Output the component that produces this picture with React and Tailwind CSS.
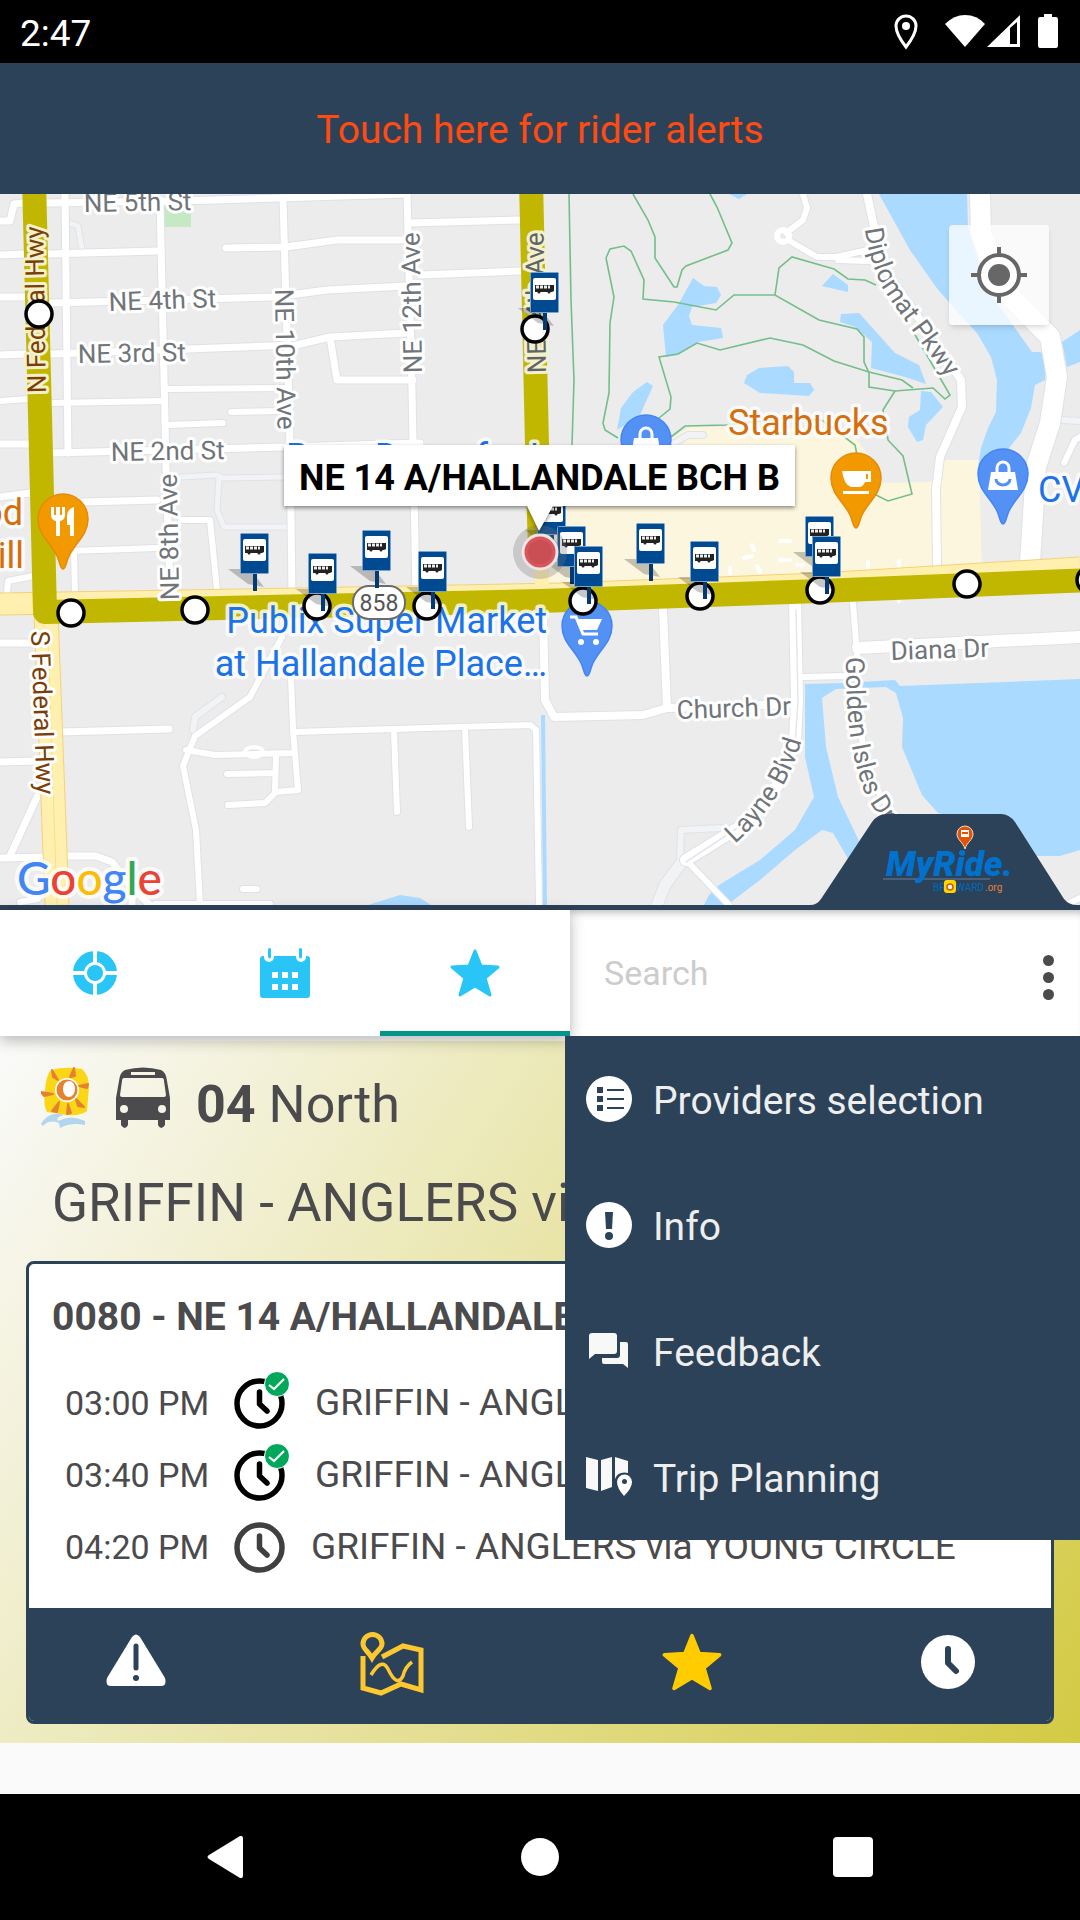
import React from 'react';

const roads = [
  { d: 'M0 221 H10 L14 204 L23 203 M46 203 L180 201 L406 194', w: 7 },
  { d: 'M0 255 L24 254 M48 254 L158 251 M226 248 L286 247 L337 240 L406 240 M410 223 L520 220', w: 7 },
  { d: 'M0 297 H27 M52 303 L275 297 L327 290 L406 286 M420 275 L520 271', w: 7 },
  { d: 'M0 355 L26 354 M52 354 L296 345 L330 337 L406 333 M330 337 L337 380 H413', w: 7 },
  { d: 'M167 389 L286 388 M0 401 L28 399 M52 403 L162 401 M231 412 L286 411 M167 425 L223 423', w: 6 },
  { d: 'M0 444 H28 M53 453 L286 447 L420 443 M0 497 L30 493 M83 502 L157 500', w: 7 },
  { d: 'M181 520 H210 L217 590 M70 551 L157 548 M74 551 L75 595 M7 593 L8 581 L33 576', w: 6 },
  { d: 'M65 194 L68 453 M160 200 L166 465 L170 590 M283 198 L290 444 L292 595 M407 194 L412 390 L416 595', w: 7 },
  { d: 'M0 643 H34 M60 732 L169 729 M0 762 L38 761 M37 797 L9 858 M0 858 L47 857 M68 856 H96 L112 862 L134 890 L150 905 M132 880 V905', w: 7 },
  { d: 'M282 637 L250 697 L195 736 L183 766 L196 830 L200 905 M186 750 L215 755 L294 753', w: 6 },
  { d: 'M291 677 L293 730 L298 790 L276 792 L265 803 L228 805 M276 755 L275 792 M227 774 L275 773', w: 6 },
  { d: 'M294 732 L530 725 L536 730 L539 905 M394 731 L397 812 M465 729 L469 827 M243 889 H257 M155 904 H270 M20 902 L38 899', w: 6 },
  { d: 'M543 613 L545 700 L554 717 L643 715 L667 708 L795 704 M663 610 L667 708', w: 8 },
  { d: 'M795 603 L797 700 L795 740 L778 785 L743 825 L686 860 M858 648 L1080 637', w: 12 },
  { d: 'M686 860 L729 905 M803 677 L845 676 M853 603 L857 655 L862 740 L875 785 L895 820', w: 6 },
  { d: 'M803 194 L807 208 L803 220 L786 233 M788 240 L817 257 H836 L868 250 M838 260 L868 261 M1064 463 L1075 440 L1080 437 M1066 905 L1080 898', w: 6 },
  { d: 'M867 194 L874 227 L885 270 L920 320 L961 380 L962 407 L940 457 L936 490 L937 565', w: 8 },
  { d: 'M980 194 L981 233 L1001 287 L1050 337 L1057 377 L1050 423 L1036 467 L1030 562', w: 20 },
];

const paleRoads = [
  { d: 'M69 223 L78 226 L82 250 M181 477 L217 475 L222 478 L286 477 M219 478 L217 510 L224 527 L287 527', w: 5 },
  { d: 'M222 697 L195 717 L193 730 M722 828 L681 830 L680 857 M671 445 L688 435 L703 435 M1062 420 L1080 421', w: 6 },
  { d: 'M682 862 L665 885 L657 905', w: 11 },
];

const waters = [
  '879,194 967,194 968,227 988,290 1032,352 1041,352 1046,363 1045,380 1035,385 1031,408 1021,433 1005,453 978,467 981,448 988,428 996,412 997,380 991,357 977,333 953,307 936,287 910,250',
  '1062,342 1080,330 1080,362 1067,367',
  '693,278 704,286 717,287 721,295 716,303 692,307 689,316 692,325 721,328 723,338 698,342 678,355 666,357 663,325 678,305',
  '647,382 653,386 640,415 617,430 621,408 633,392',
  '759,368 788,366 794,372 794,383 810,383 814,390 809,396 760,393 744,383 747,375',
  '833,274 848,285 848,292 822,286',
  '841,314 859,313 895,353 919,365 926,384 905,377 871,368 872,342 855,327 840,322',
  '921,391 931,392 943,407 926,425 923,440 917,442 908,427 909,417 920,410',
  '729,194 747,194 739,199',
  '368,905 400,895 420,898 431,905',
  '805,684 843,683 895,680 900,686 1080,679 1080,850 1060,856 1025,856 1000,830 938,813 922,795 902,747 903,718 896,693 886,687 836,689 822,698 826,747 838,797 860,843 850,862 833,833 822,830 795,850 760,880 731,902 722,905 704,905 709,895 719,885 760,860 795,830 814,797 805,757',
];

const trails = [
  'M569 194 L571 300 L574 380 L572 445',
  'M633 194 L648 220 L655 237 V258 L674 287 H677 L682 270 L686 266 L728 250 L732 243 L717 207 L710 194',
  'M618 438 L605 430 L603 423 L609 393 L610 323 L614 297 L606 258 L610 249 L624 246 L631 251 L644 280 L643 299 L674 302 L716 310 L734 295 H775 L819 320 L857 329 L864 337 V362 L869 373 V387 L895 391 L933 388 L945 399 L950 395 L914 333',
  'M775 295 L779 268 L792 257 L834 269 L848 279 L865 280 L876 285',
  'M659 418 L670 409 L671 397 L659 357 L678 354 L697 343 L720 350 L770 338 L803 345 L834 361 L869 372 L902 380 L913 388',
  'M671 437 L685 426 L726 425 L788 418 L822 420 L855 445 L857 455',
  'M895 391 L883 410 L888 440 L903 456 L912 494 L888 501 L874 494',
];

const streets = [
  { name: 'NE 5th St', x: 84, y: 212, angle: -1 },
  { name: 'NE 4th St', x: 109, y: 311, angle: -2 },
  { name: 'NE 3rd St', x: 78, y: 363, angle: -1 },
  { name: 'NE 2nd St', x: 111, y: 461, angle: -1 },
  { name: 'NE 10th Ave', x: 275, y: 289, angle: 89 },
  { name: 'NE 12th Ave', x: 422, y: 373, angle: -91 },
  { name: 'NE 8th Ave', x: 179, y: 600, angle: -91 },
  { name: 'Diana Dr', x: 891, y: 660, angle: -2 },
  { name: 'Church Dr', x: 677, y: 719, angle: -2 },
];

const highways = [
  { name: 'N Federal Hwy', x: 46, y: 393, angle: -91, fill: '#7a3e06', halo: '#f3f0cc' },
  { name: 'NE 14th Ave', x: 546, y: 373, angle: -91, fill: '#5f6368', halo: '#f3f0cc' },
  { name: 'S Federal Hwy', x: 31, y: 631, angle: 88, fill: '#7a3e06', halo: '#ffffff' },
];

const places = [
  { name: 'Ross Dress for Less', x: 286, y: 469, fill: '#1a73e8' },
  { name: 'Starbucks', x: 728, y: 435, fill: '#d56e0c' },
  { name: 'CVS', x: 1038, y: 502, fill: '#1a73e8' },
  { name: 'od', x: 23, y: 525, fill: '#d56e0c', anchor: 'end' },
  { name: 'ill', x: 24, y: 568, fill: '#d56e0c', anchor: 'end' },
  { name: 'Publix Super Market', x: 547, y: 633, fill: '#1a73e8', anchor: 'end' },
  { name: 'at Hallandale Place…', x: 547, y: 676, fill: '#1a73e8', anchor: 'end' },
];

const routeStops = [
  [39, 314], [535, 329], [71, 613], [195, 610], [317, 606], [427, 606],
  [583, 601], [700, 596], [820, 590], [967, 584], [1090, 580],
];

const busSigns = [
  [530, 272], [240, 533], [308, 553], [362, 530], [418, 551], [537, 494],
  [557, 526], [574, 546], [636, 523], [690, 541], [805, 516], [812, 536],
];

const BusSign = ({ x, y }) => (
  <g transform={`translate(${x} ${y})`}>
    <path d="M-12 36 H10 L24 54 L8 51 Z" fill="#000" opacity="0.22" />
    <rect x="13" y="40" width="4" height="18" fill="#053a70" />
    <rect x="0.5" y="0.5" width="28" height="40" rx="1" fill="#004a91" stroke="#7ba3cb" />
    <rect x="3" y="6" width="23" height="22" rx="2" fill="#fff" />
    <path d="M5 13 H24 V19 L22 20 H5 Z" fill="#222" />
    <path d="M6 15 H20" stroke="#eee" strokeWidth="3" strokeDasharray="3 1" />
    <circle cx="9" cy="20" r="1.5" fill="#222" />
    <circle cx="19" cy="20" r="1.5" fill="#222" />
  </g>
);

const PlacePin = ({ x, y, fill, stroke, children }) => (
  <g transform={`translate(${x} ${y})`}>
    <path
      d="M0 76 C-3 76 -3 69 -6 63 C-12 50 -25 42 -25 26 A25 25 0 1 1 25 26 C25 42 12 50 6 63 C3 69 3 76 0 76 Z"
      fill={fill}
      stroke={stroke}
      strokeWidth="1.5"
    />
    {children}
  </g>
);

const Bag = () => (
  <g>
    <path d="M-12 24 H12 L15 42 H-15 Z" fill="#fff" />
    <path d="M-6 25 V20 A6 6 0 0 1 6 20 V25" fill="none" stroke="#fff" strokeWidth="3" />
    <path d="M-7 31 A7 6 0 0 0 7 31" fill="none" stroke="#5491f5" strokeWidth="3" />
  </g>
);

const Halo = ({ halo = '#ffffff', width = 6, children, ...rest }) => (
  <text stroke={halo} strokeWidth={width} strokeLinejoin="round" paintOrder="stroke" {...rest}>
    {children}
  </text>
);

const RouteMap = () => (
  <svg viewBox="0 194 1080 711" className="block w-full" fontFamily="Roboto, sans-serif" role="img" aria-label="Route map">
    <rect y="194" width="1080" height="711" fill="#ececec" />
    <path d="M164 206 H191 V227 H164 Z" fill="#c5e8c5" />
    <path d="M549 595 V500 L671 437 L691 427 L830 428 L857 440 L870 457 L874 483 L931 482 L940 460 L979 460 L982 575 Z" fill="#fdf6df" />
    {waters.map((points) => <polygon key={points} points={points} fill="#aadaff" />)}
    <path d="M543 715 L545 905" stroke="#aadaff" strokeWidth="4" />
    <g fill="none" stroke="#74be8b" strokeWidth="1.6">
      {trails.map((d) => <path key={d} d={d} />)}
    </g>

    <g fill="none" strokeLinecap="round" strokeLinejoin="round">
      {paleRoads.map((r) => <path key={r.d} d={r.d} stroke="#dfe2e8" strokeWidth={r.w + 2} />)}
      {paleRoads.map((r) => <path key={r.d} d={r.d} stroke="#f1f3f5" strokeWidth={r.w} />)}
      {roads.map((r) => <path key={r.d} d={r.d} stroke="#dfe1e6" strokeWidth={r.w + 2} />)}
      {roads.map((r) => <path key={r.d} d={r.d} stroke="#ffffff" strokeWidth={r.w} />)}
      <circle cx="783" cy="236" r="6" stroke="#fff" strokeWidth="6" />
      <ellipse cx="254" cy="752" rx="9" ry="5" stroke="#fff" strokeWidth="4" />
      <path d="M796 610 L798 700 L795 745 M686 862 L742 825" stroke="#e4e6ea" strokeWidth="1.5" />
      <path d="M752 545 L754 550 M744 558 L752 556 M780 541 H790 M780 560 H790 M797 565 H803 M757 566 L760 572 M868 562 V567 M899 561 V566 M730 568 V573 M899 600 V601" stroke="#fff" strokeWidth="4" />
    </g>

    <g fill="none">
      <path d="M46 612 L57 905" stroke="#f6d078" strokeWidth="25" />
      <path d="M0 604 L300 599 L560 594 L820 584 L1080 568" stroke="#f6d078" strokeWidth="23" />
      <path d="M46 612 L57 905" stroke="#fff0b0" strokeWidth="23" />
      <path d="M0 604 L300 599 L560 594 L820 584 L1080 568" stroke="#fff0b0" strokeWidth="21" />
      <path d="M48 640 L57 905" stroke="#f9dd8d" strokeWidth="1" />
      <path d="M541 550 L542 590" stroke="#fff0b0" strokeWidth="14" />
    </g>

    <g fill="none" stroke="#c2b700" strokeWidth="24" strokeLinejoin="round">
      <path d="M34 180 L45 612 L540 601 L820 591 L1090 580" />
      <path d="M531 180 L537 445 L540 552" />
    </g>

    <g fontSize="26" fill="#70757a">
      {streets.map((s) => (
        <Halo key={s.name} transform={`translate(${s.x} ${s.y}) rotate(${s.angle})`}>{s.name}</Halo>
      ))}
      {highways.map((s) => (
        <Halo key={s.name} fill={s.fill} halo={s.halo} transform={`translate(${s.x} ${s.y}) rotate(${s.angle})`}>{s.name}</Halo>
      ))}
      <path id="diplomat" d="M865 229 Q869 262 884 290 Q898 312 960 395" fill="none" />
      <path id="layne" d="M735 844 Q795 790 806 720" fill="none" />
      <path id="golden" d="M846 657 Q845 740 863 788 Q870 808 905 850" fill="none" />
      <Halo><textPath href="#diplomat">Diplomat Pkwy</textPath></Halo>
      <Halo><textPath href="#layne">Layne Blvd</textPath></Halo>
      <Halo><textPath href="#golden">Golden Isles Dr</textPath></Halo>
    </g>

    <g fontSize="36">
      {places.map((p) => (
        <Halo key={p.name} x={p.x} y={p.y} fill={p.fill} textAnchor={p.anchor} halo="rgba(255,255,255,0.8)" width={7}>{p.name}</Halo>
      ))}
    </g>

    <PlacePin x={63} y={493} fill="#f29900" stroke="#e48a0c">
      <path d="M-12 14 V22 Q-12 27 -7 28 V43 H-3 V28 Q2 27 2 22 V14 H-1 V22 H-3 V14 H-7 V22 H-9 V14 Z M11 14 Q4 16 4 24 V32 H7 V43 H11 Z" fill="#fff" />
    </PlacePin>
    <PlacePin x={856} y={452} fill="#f29900" stroke="#e48a0c">
      <path d="M-14 19 H15 V30 H9 Q7 35 3 35 H-5 Q-12 33 -14 19 Z M10 22 V27 H12 V22 Z M-13 39 H13 V42 H-13 Z" fill="#fff" fillRule="evenodd" />
    </PlacePin>
    <PlacePin x={1003} y={448} fill="#5491f5" stroke="#4285f4"><Bag /></PlacePin>
    <PlacePin x={646} y={414} fill="#5491f5" stroke="#4285f4"><Bag /></PlacePin>
    <PlacePin x={587} y={600} fill="#5491f5" stroke="#4285f4">
      <path d="M-17 17 H-11 L-4 34 H11" fill="none" stroke="#fff" strokeWidth="3" />
      <path d="M-11 19 H15 L10 30 H-6 Z" fill="#fff" />
      <circle cx="-6" cy="42" r="3" fill="#fff" />
      <circle cx="9" cy="42" r="3" fill="#fff" />
    </PlacePin>

    <rect x="353" y="586" width="52" height="33" rx="16" fill="#fff" stroke="#6b6b6b" strokeWidth="2" />
    <text x="379" y="611" textAnchor="middle" fontSize="23" fill="#555">858</text>

    {routeStops.map(([x, y]) => (
      <circle key={x} cx={x} cy={y} r="13" fill="#fff" stroke="#000" strokeWidth="3.5" />
    ))}
    {busSigns.map(([x, y]) => <BusSign key={`${x}-${y}`} x={x} y={y} />)}

    <circle cx="540" cy="552" r="27" fill="#777" opacity="0.3" />
    <circle cx="540" cy="552" r="17" fill="#d9545b" stroke="#eee4e4" strokeWidth="3" />
    <circle cx="540" cy="552" r="12" fill="#c94f55" />

    <g filter="drop-shadow(0 2px 2px rgba(0,0,0,0.45))">
      <path d="M284 445 H795 V506 H553 L539 531 L527 506 H284 Z" fill="#fff" />
    </g>
    <text x="299" y="490" fontSize="36" fontWeight="700" fill="#000">NE 14 A/HALLANDALE BCH B</text>

    <Halo halo="rgba(255,255,255,0.8)" width={8} x="17" y="895" fontFamily="Lato, sans-serif" fontSize="46" fontWeight="500">
      <tspan fill="#4285f4">G</tspan>
      <tspan fill="#ea4335">o</tspan>
      <tspan fill="#fbbc05">o</tspan>
      <tspan fill="#4285f4">g</tspan>
      <tspan fill="#34a853">l</tspan>
      <tspan fill="#ea4335">e</tspan>
    </Halo>

    <path d="M810 905 Q817 905 821 899 L872 822 Q878 814 886 814 H1001 Q1009 814 1015 822 L1064 899 Q1069 905 1077 905 Z" fill="#2c4259" />
    <path d="M883 879 H990" stroke="#48607c" strokeWidth="2" />
    <text x="886" y="876" fontFamily="'Liberation Sans Narrow', Roboto, sans-serif" fontSize="35" fontWeight="900" fontStyle="italic" fill="#0072ce">MyRide.</text>
    <path d="M965 849 C963 842 957 840 957 834 A8 8 0 1 1 973 834 C973 840 967 842 965 849 Z" fill="#e35205" stroke="#f3d9cc" strokeWidth="1" />
    <path d="M961 830 H969 V837 H961 Z" fill="#fff" />
    <path d="M962 833 H968" stroke="#e35205" strokeWidth="2" />
    <g fontSize="10">
      <text x="933" y="891" fill="#0069bd">BR</text>
      <text x="956" y="891" fill="#0069bd">WARD</text>
      <text x="985" y="891" fill="#e0803c">.org</text>
    </g>
    <rect x="944" y="880" width="12" height="13" rx="3" fill="#ffd800" />
    <circle cx="950" cy="887" r="3" fill="#fff" stroke="#e35205" strokeWidth="1.5" />
  </svg>
);

const TargetIcon = () => (
  <svg viewBox="0 0 100 100" className="size-[100px]" fill="#676767" aria-hidden="true">
    <circle cx="50" cy="50" r="20" fill="#fff" stroke="#676767" strokeWidth="4" />
    <circle cx="50" cy="50" r="11" />
    <path d="M48 22 H52 V31 H48 Z M48 69 H52 V78 H48 Z M22 48 H31 V52 H22 Z M69 48 H78 V52 H69 Z" />
  </svg>
);

const StarIcon = ({ className }) => (
  <svg viewBox="0 0 50 48" className={className} fill="currentColor" stroke="currentColor" strokeWidth="3" strokeLinejoin="round" aria-hidden="true">
    <path d="M25 2 L31 17 L48 18 L35 29 L40 46 L25 37 L10 46 L15 29 L2 18 L19 17 Z" />
  </svg>
);

const SunIcon = () => (
  <svg viewBox="0 0 48 61" className="h-[61px] w-12" aria-hidden="true">
    <path d="M10 3 Q24 -1 41 2 Q48 8 48 20 L46 44 Q40 49 26 48 L6 45 Q2 38 4 24 Q5 8 10 3 Z" fill="#fbd616" />
    <path d="M11 3 L17 13 L12 10 Z M33 1 L29 10 L34 9 Z M47 17 L38 19 L46 21 Z M43 40 L35 32 L37 39 Z M26 47 L27 37 L30 46 Z M11 44 L18 35 L16 45 Z M0 25 L12 27 L3 29 Z" fill="#e5812f" stroke="#e5812f" strokeWidth="2" strokeLinejoin="round" />
    <circle cx="26" cy="23" r="12" fill="#fff" />
    <circle cx="26" cy="23" r="10.5" fill="#e5812f" />
    <ellipse cx="28" cy="22" rx="6" ry="8" fill="#fff" />
    <path d="M0 57 Q8 43 23 48 Q14 50 17 54 Q30 47 44 54 V58 Q30 55 19 61 L18 56 Q8 52 2 59 Z" fill="#b1d6ee" />
  </svg>
);

const BusIcon = () => (
  <svg viewBox="0 0 54 62" className="h-[62px] w-[54px]" fill="#4b4a4c" aria-hidden="true">
    <path
      fillRule="evenodd"
      d="M3 14 Q4 5 9 3 Q27 -2 45 3 Q50 5 51 14 L54 31 V53 H49 V58 Q45 64 42 58 V53 H12 V58 Q9 64 5 58 V53 H0 V31 Z M15 5 V8 H39 V5 Z M8 11 Q6 11 6 14 L4 28 Q4 30 6 30 H48 Q50 30 50 28 L48 14 Q48 11 46 11 Z M8 38 A4 4 0 1 0 8 46 A4 4 0 1 0 8 38 Z M46 38 A4 4 0 1 0 46 46 A4 4 0 1 0 46 38 Z"
    />
  </svg>
);

const ClockIcon = ({ live }) => (
  <svg viewBox={live ? '0 0 55 58' : '0 0 51 51'} className={live ? 'mb-1 h-[58px] w-[55px]' : 'h-[51px] w-[51px]'} fill="none" aria-hidden="true">
    <g transform={live ? 'translate(0 6)' : undefined} stroke={live ? '#000' : '#404040'}>
      <circle cx="25.5" cy="25.5" r="22.5" strokeWidth="5.5" />
      <path d="M25.5 14 V26 L33 33" strokeWidth="5.5" strokeLinecap="round" strokeLinejoin="round" />
    </g>
    {live && (
      <g>
        <circle cx="43" cy="12" r="12.5" fill="#00a859" stroke="#fff" />
        <path d="M35 13 L40 17 L50 7" stroke="#fff" strokeWidth="2.2" />
      </g>
    )}
  </svg>
);

const menuItems = [
  {
    label: 'Providers selection',
    icon: (
      <g>
        <circle cx="23" cy="23" r="23" fill="#fff" />
        <path d="M11 11 H17 V17 H11 Z M11 20 H17 V26 H11 Z M11 29 H17 V35 H11 Z M21 13 H38 V15 H21 Z M21 22 H38 V24 H21 Z M21 31 H38 V33 H21 Z" fill="#2c4259" />
      </g>
    ),
  },
  {
    label: 'Info',
    icon: (
      <g>
        <circle cx="23" cy="23" r="23" fill="#fff" />
        <path d="M19 10 H27 L26 27 H20 Z" fill="#2c4259" />
        <circle cx="23" cy="34" r="4" fill="#2c4259" />
      </g>
    ),
  },
  {
    label: 'Feedback',
    icon: (
      <path
        d="M6 5 H28 Q31 5 31 8 V23 Q31 26 28 26 H9 L3 31 V8 Q3 5 6 5 Z M34 14 H40 Q42 14 42 16 V40 L37 36 H18 Q16 36 16 34 V30 H31 Q34 30 34 27 Z"
        fill="#f8f8f9"
      />
    ),
  },
  {
    label: 'Trip Planning',
    icon: (
      <g>
        <path d="M0 3 L12 6 V37 L0 34 Z M15 6 L26 3 V33 L15 37 Z M29 3 L42 7 V19 Q32 17 29 25 Z" fill="#f8f8f9" />
        <path d="M38 42 Q31 34 31 28 A7.5 7.5 0 1 1 46 28 Q46 34 38 42 Z M38.5 25 A2.5 2.5 0 1 0 38.5 30 A2.5 2.5 0 1 0 38.5 25 Z" fill="#fff" fillRule="evenodd" />
      </g>
    ),
  },
];

const arrivals = [
  { time: '03:00 PM', live: true },
  { time: '03:40 PM', live: true },
  { time: '04:20 PM', live: false },
];

const StatusBar = () => (
  <div className="flex h-[63px] items-center justify-between bg-black px-5 text-white">
    <span className="pt-1 text-[37px] leading-none">2:47</span>
    <svg viewBox="0 0 166 36" className="h-9 w-[166px]" fill="#fff" aria-hidden="true">
      <path d="M12 2 A10 10 0 0 0 2 12 Q2 20 12 33 Q22 20 22 12 A10 10 0 0 0 12 2 Z" fill="none" stroke="#fff" strokeWidth="3" />
      <circle cx="12" cy="12" r="4" />
      <path d="M51 0 Q63 0 71 9 L51 32 L31 9 Q40 0 51 0 Z" transform="translate(20 1)" />
      <path d="M93 33 L126 1 V33 Z M116 14 V30 H123 V8 Z" fillRule="evenodd" />
      <path d="M150 0 H158 V3 H162 Q164 3 164 6 V31 Q164 34 162 34 H146 Q144 34 144 31 V6 Q144 3 146 3 H150 Z" />
    </svg>
  </div>
);

const TabBar = () => (
  <div className="relative z-20 grid h-[126px] grid-cols-[57fr_51fr] bg-white">
    <nav className="relative z-10 flex bg-white text-[#29c5f6] shadow-[0_4px_14px_rgba(0,0,0,0.28)]">
      <button type="button" aria-label="Nearby" className="flex flex-1 items-center justify-center">
        <svg viewBox="0 0 44 44" className="size-11" fill="none" stroke="currentColor" aria-hidden="true">
          <circle cx="22" cy="22" r="16.5" strokeWidth="11" />
          <path d="M22 0 V12 M22 32 V44 M0 22 H12 M32 22 H44" stroke="#fff" strokeWidth="4" />
          <circle cx="22" cy="22" r="8" fill="currentColor" stroke="none" />
        </svg>
      </button>
      <button type="button" aria-label="Schedules" className="flex flex-1 items-center justify-center">
        <svg viewBox="0 0 50 50" className="size-[50px]" fill="currentColor" aria-hidden="true">
          <path d="M3 8 H47 Q50 8 50 11 V47 Q50 50 47 50 H3 Q0 50 0 47 V11 Q0 8 3 8 Z" />
          <path d="M4 6 V9 A5 5 0 0 0 14 9 V6 Z M36 6 V9 A5 5 0 0 0 46 9 V6 Z" fill="#fff" />
          <path d="M8 1 Q9.5 -1 11 1 V9 Q9.5 12 8 9 Z M39 1 Q40.5 -1 42 1 V9 Q40.5 12 39 9 Z" />
          <path d="M12 24 H18 V30 H12 Z M22 24 H28 V30 H22 Z M32 24 H38 V30 H32 Z M12 36 H18 V42 H12 Z M22 36 H28 V42 H22 Z M32 36 H38 V42 H32 Z" fill="#fff" />
        </svg>
      </button>
      <button type="button" aria-label="Favorites" className="flex flex-1 items-center justify-center border-b-5 border-[#009688] pt-1">
        <StarIcon className="h-12 w-[50px]" />
      </button>
    </nav>
    <div className="flex items-center pr-5 pl-[34px] shadow-[inset_0_8px_8px_-6px_rgba(0,0,0,0.3)]">
      <input type="text" aria-label="Search" placeholder="Search" className="min-w-0 flex-1 text-[34px] leading-10 text-[#4b4a4c] outline-none placeholder:text-[#cccccc]" />
      <button type="button" aria-label="More options" className="flex w-6 flex-col items-center gap-1.5 pt-2">
        <span className="size-[11px] rounded-full bg-[#4b4a4c]" />
        <span className="size-[11px] rounded-full bg-[#4b4a4c]" />
        <span className="size-[11px] rounded-full bg-[#4b4a4c]" />
      </button>
    </div>

    <ul className="absolute top-full right-0 z-30 w-[515px] bg-[#2c4259]">
      {menuItems.map((item) => (
        <li key={item.label}>
          <button type="button" className="flex h-[126px] w-full items-center gap-[21px] pl-[21px] text-left text-[39px] text-[#eeeeee]">
            <svg viewBox="0 0 46 46" className="size-[46px]" aria-hidden="true">{item.icon}</svg>
            <span className="pt-1">{item.label}</span>
          </button>
        </li>
      ))}
    </ul>
  </div>
);

const StopCard = () => (
  <div className="mx-[26px] mt-5 overflow-hidden rounded-lg border-3 border-[#2c4259] bg-white">
    <h3 className="truncate px-[23px] pt-[26px] text-[39px] leading-[54px] font-bold">0080 - NE 14 A/HALLANDALE BCH B</h3>
    <ul className="mt-[23px] pb-[25px]">
      {arrivals.map((a) => (
        <li key={a.time} className="flex h-18 items-center pl-9">
          <span className="w-[169px] shrink-0 text-[34px] whitespace-nowrap">{a.time}</span>
          <ClockIcon live={a.live} />
          <span className="pl-[26px] text-[37px] whitespace-nowrap">GRIFFIN - ANGLERS via YOUNG CIRCLE</span>
        </li>
      ))}
    </ul>
    <div className="flex h-[113px] items-center justify-between bg-[#2c4259] pr-[71px] pb-1.5 pl-[75px] text-white">
      <div className="flex gap-48">
        <button type="button" aria-label="Alerts" className="flex size-16 items-center justify-center">
          <svg viewBox="0 0 60 52" className="h-[52px] w-[60px]" fill="#fff" aria-hidden="true">
            <path d="M26 3 Q30 -2 34 3 L59 44 Q61 52 55 52 H5 Q-1 52 1 44 Z" />
            <path d="M30 12 V34" stroke="#2c4259" strokeWidth="5" strokeLinecap="round" />
            <circle cx="30" cy="44" r="3" fill="#2c4259" />
          </svg>
        </button>
        <button type="button" aria-label="Show on map" className="mt-1 flex size-16 items-center justify-center">
          <svg viewBox="0 0 64 64" className="size-16" fill="none" stroke="#fdc82f" strokeWidth="5" aria-hidden="true">
            <path d="M12 26 C8 19 3 17 3 12 A9.5 9.5 0 0 1 22 12 C22 17 16 19 12 26 Z" />
            <path d="M3 24 V56 L21 61 L41 52 L61 58 V18 L43 14 L22 25" />
            <path d="M11 43 Q22 25 28 37 Q37 56 43 44 Q45 35 52 30" strokeWidth="3.5" />
          </svg>
        </button>
      </div>
      <div className="flex gap-48">
        <button type="button" aria-label="Remove from favorites" className="flex size-16 items-center justify-center text-[#ffcc00]">
          <StarIcon className="h-[58px] w-[60px]" />
        </button>
        <button type="button" aria-label="All times" className="flex size-16 items-center justify-center">
          <svg viewBox="0 0 54 54" className="size-[54px]" aria-hidden="true">
            <circle cx="27" cy="27" r="27" fill="#fff" />
            <path d="M27 14 V28 L35 36" fill="none" stroke="#2c4259" strokeWidth="6" strokeLinecap="round" strokeLinejoin="round" />
          </svg>
        </button>
      </div>
    </div>
  </div>
);

const NavBar = () => (
  <div className="grid h-[126px] grid-cols-[1fr_38px_1fr] items-center bg-black px-[207px]">
    <button type="button" aria-label="Back" className="justify-self-start">
      <svg viewBox="0 0 36 42" className="h-[42px] w-9" fill="#fff" aria-hidden="true">
        <path d="M33 0 Q36 -1 36 3 V39 Q36 43 33 42 L2 23 Q-1 21 2 19 Z" />
      </svg>
    </button>
    <button type="button" aria-label="Home" className="size-[38px] rounded-full bg-white" />
    <button type="button" aria-label="Recent apps" className="size-10 justify-self-end rounded-sm bg-white" />
  </div>
);

const App = () => (
  <div className="min-h-screen overflow-hidden bg-[#fafafa] font-['Roboto',sans-serif] text-[#4b4a4c]">
    <StatusBar />
    <button type="button" className="flex h-[131px] w-full items-center justify-center bg-[#2c4259] pt-1 text-[39px] text-[#ff4a10]">
      Touch here for rider alerts
    </button>

    <div className="relative border-b-5 border-[#2c4259]">
      <RouteMap />
      <button type="button" aria-label="My location" className="absolute top-[31px] right-[31px] rounded-sm bg-white/75 shadow-md">
        <TargetIcon />
      </button>
    </div>

    <TabBar />

    <div className="mt-[5px] bg-[linear-gradient(123deg,#fafafa,#d3ca44)] pt-[26px] pb-[19px]">
      <div className="flex items-start pl-[41px]">
        <SunIcon />
        <span className="pl-[27px]"><BusIcon /></span>
        <h2 className="pl-[26px] text-[52px] leading-[76px]"><b>04</b> North</h2>
      </div>
      <p className="mt-[22px] overflow-hidden pl-[52px] text-[53px] leading-[76px] whitespace-nowrap">GRIFFIN - ANGLERS via YOUNG CIRCLE</p>
      <StopCard />
    </div>
    <div className="h-[51px]" />
    <NavBar />
  </div>
);

export default App;
